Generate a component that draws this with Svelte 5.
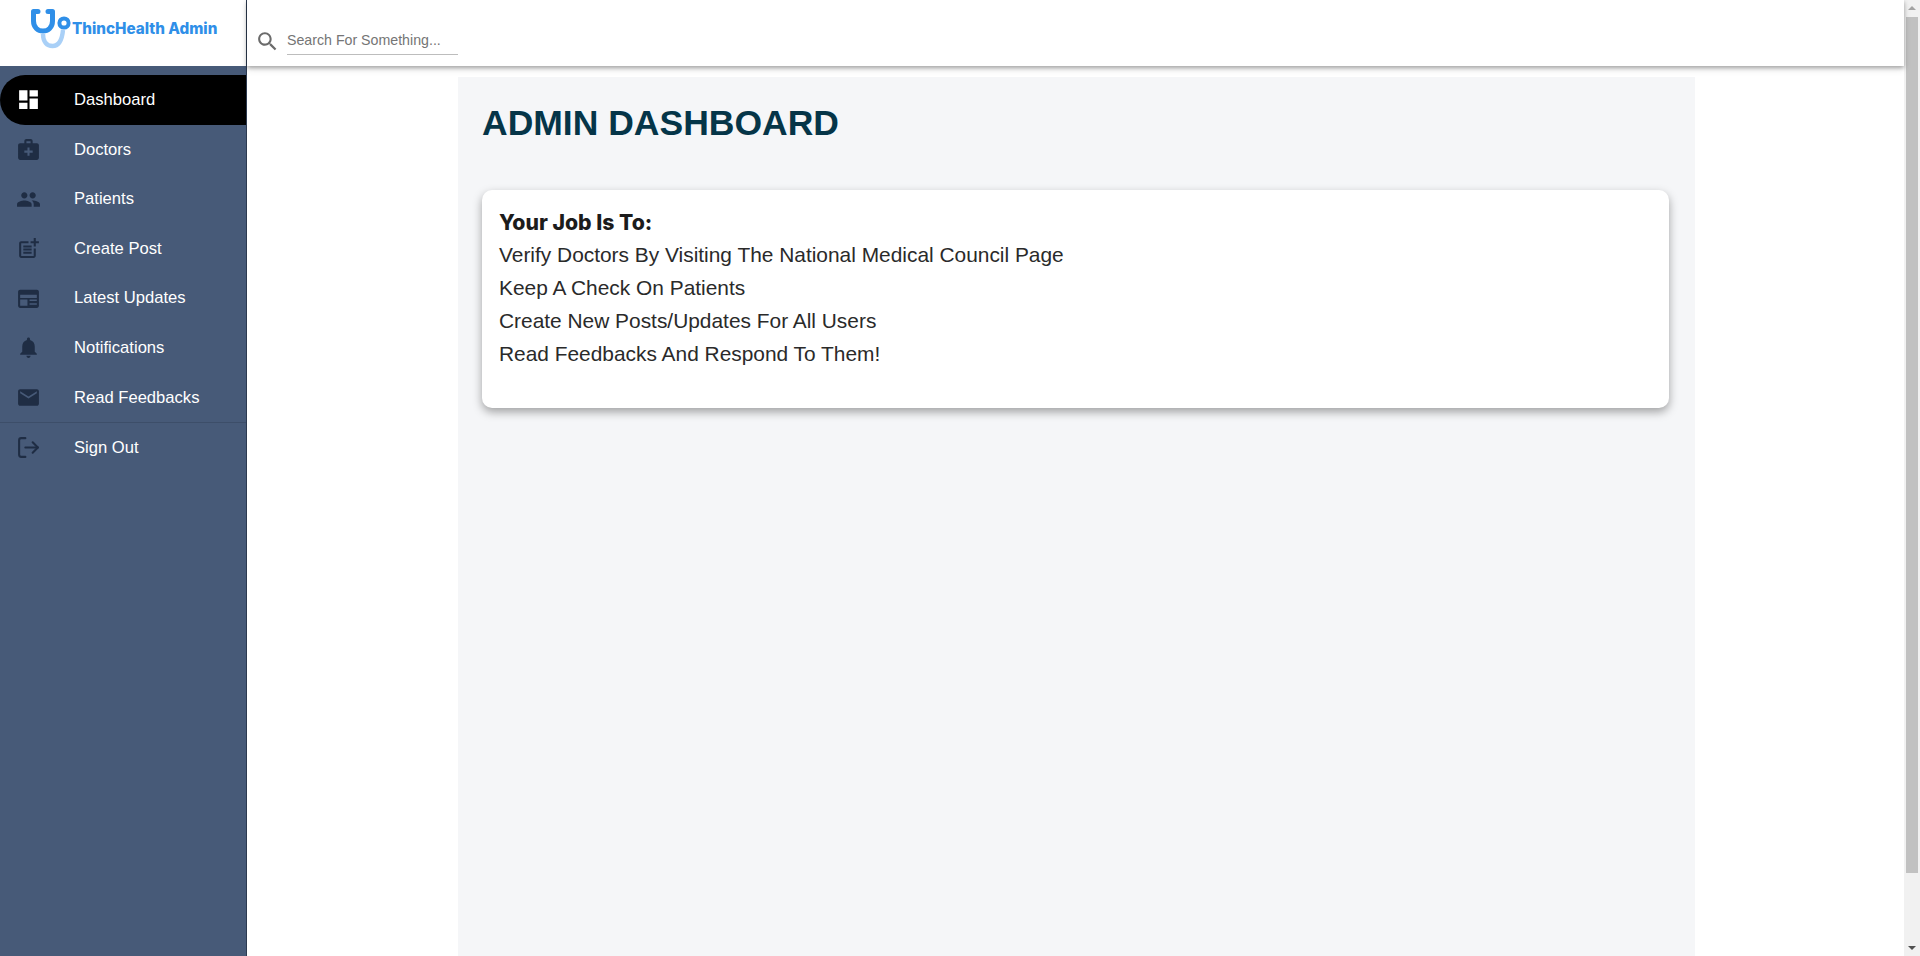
<script>
  const items = [
    { label: 'Dashboard', d: 'M3 13h8V3H3v10zm0 8h8v-6H3v6zm10 0h8V11h-8v10zm0-18v6h8V3h-8z', active: true },
    { label: 'Doctors', d: 'M20 6h-4V4c0-1.1-.9-2-2-2h-4c-1.1 0-2 .9-2 2v2H4c-1.1 0-2 .9-2 2v12c0 1.1.9 2 2 2h16c1.1 0 2-.9 2-2V8c0-1.1-.9-2-2-2zM10 4h4v2h-4V4zm6 11h-3v3h-2v-3H8v-2h3v-3h2v3h3v2z' },
    { label: 'Patients', d: 'M16 11c1.66 0 2.99-1.34 2.99-3S17.66 5 16 5c-1.66 0-3 1.34-3 3s1.34 3 3 3zm-8 0c1.66 0 2.99-1.34 2.99-3S9.66 5 8 5C6.34 5 5 6.34 5 8s1.34 3 3 3zm0 2c-2.33 0-7 1.17-7 3.5V19h14v-2.5c0-2.33-4.67-3.5-7-3.5zm8 0c-.29 0-.62.02-.97.05 1.16.84 1.97 1.97 1.97 3.45V19h6v-2.5c0-2.33-4.67-3.5-7-3.5z' },
    { label: 'Create Post', d: 'M17 19.22H5V7h7V5H5c-1.1 0-2 .9-2 2v12c0 1.1.9 2 2 2h12c1.1 0 2-.9 2-2v-7h-2v7.22zM19 2h-2v3h-3c.01.01 0 2 0 2h3v2.99c.01.01 2 0 2 0V7h3V5h-3V2zM7 9h8v2H7zM7 12v2h8v-2h-3zM7 15h8v2H7z' },
    { label: 'Latest Updates', d: 'M4 3.5h16c1.1 0 2 .9 2 2V19c0 1.1-.9 2-2 2H4c-1.1 0-2-.9-2-2V5.5c0-1.1.9-2 2-2zM4 8.5v3h16v-3H4zM4 13v6h7v-6H4zM13 13v1.5h7V13h-7zM13 16.5V18h7v-1.5h-7z' },
    { label: 'Notifications', d: 'M12 22c1.1 0 2-.9 2-2h-4c0 1.1.89 2 2 2zm6-6v-5c0-3.07-1.64-5.64-4.5-6.32V4c0-.83-.67-1.5-1.5-1.5s-1.5.67-1.5 1.5v.68C7.63 5.36 6 7.92 6 11v5l-2 2v1h16v-1l-2-2z' },
    { label: 'Read Feedbacks', d: 'M20 4H4c-1.1 0-1.99.9-1.99 2L2 18c0 1.1.9 2 2 2h16c1.1 0 2-.9 2-2V6c0-1.1-.9-2-2-2zm0 4l-8 5-8-5V6l8 5 8-5v2z' }
  ];
  const tasks = [
    'Verify Doctors By Visiting The National Medical Council Page',
    'Keep A Check On Patients',
    'Create New Posts/Updates For All Users',
    'Read Feedbacks And Respond To Them!'
  ];
</script>

<div class="page">
  <aside class="sidebar">
    <div class="brand">
      <svg class="logo" viewBox="0 0 46 46" width="46" height="46" aria-hidden="true">
        <path d="M16 27 C16 35 20 39 25.5 39 C32 39 35 34 36 23" fill="none" stroke="#a9d0f7" stroke-width="4.4"/>
        <path d="M11 4.5 H6.5 V14 C6.5 20.5 11 24 16 24 C21 24 25.5 20.5 25.5 14 V4.5 H21" fill="none" stroke="#2f8fe8" stroke-width="5" stroke-linecap="round" stroke-linejoin="round"/>
        <circle cx="37" cy="16" r="4.6" fill="#fff" stroke="#2f8fe8" stroke-width="4"/>
      </svg>
      <span class="brand-name">ThincHealth Admin</span>
    </div>
    <nav class="nav">
      {#each items as item}
        <a class="nav-item" class:active={item.active} href="#top">
          <svg class="icon" viewBox="0 0 24 24" aria-hidden="true"><path fill-rule="evenodd" d={item.d} /></svg>
          <span>{item.label}</span>
        </a>
      {/each}
      <a class="nav-item signout" href="#top">
        <svg class="icon stroke" viewBox="0 0 24 24" aria-hidden="true">
          <path d="M9 21H5a2 2 0 0 1-2-2V5a2 2 0 0 1 2-2h4" />
          <path d="M16 17l5-5-5-5" />
          <path d="M21 12H9" />
        </svg>
        <span>Sign Out</span>
      </a>
    </nav>
  </aside>

  <div class="main">
    <header class="topbar">
      <svg class="search-icon" viewBox="0 0 24 24" aria-hidden="true">
        <path d="M15.5 14h-.79l-.28-.27C15.41 12.59 16 11.11 16 9.5 16 5.91 13.09 3 9.5 3S3 5.91 3 9.5 5.91 16 9.5 16c1.61 0 3.09-.59 4.23-1.57l.27.28v.79l5 4.99L20.49 19l-4.99-5zm-6 0C7.01 14 5 11.99 5 9.5S7.01 5 9.5 5 14 7.01 14 9.5 11.99 14 9.5 14z" />
      </svg>
      <input class="search" type="text" placeholder="Search For Something..." />
    </header>
    <main class="content">
      <section class="panel">
        <h1>ADMIN DASHBOARD</h1>
        <div class="card">
          <h2>Your Job Is To:</h2>
          {#each tasks as task}
            <p>{task}</p>
          {/each}
        </div>
      </section>
    </main>
  </div>

  <div class="scrollbar" aria-hidden="true">
    <span class="arrow up"></span>
    <span class="thumb"></span>
    <span class="arrow down"></span>
  </div>
</div>

<style>
  :global(body) {
    margin: 0;
    background: #fff;
    font-family: "Liberation Sans", Arial, sans-serif;
  }
  .page {
    display: flex;
    height: 956px;
    overflow: hidden;
  }
  .sidebar {
    width: 246px;
    flex: none;
    display: flex;
    flex-direction: column;
    background: #475a78;
    border-right: 1px solid #2c3a50;
  }
  .brand {
    height: 66px;
    flex: none;
    background: #fff;
    display: flex;
    align-items: flex-start;
    padding-left: 27px;
    box-sizing: border-box;
  }
  .logo {
    flex: none;
    margin-top: 7px;
    margin-right: -1px;
  }
  .brand-name {
    margin-top: 19px;
    font-family: Inter, sans-serif;
    font-size: 15.25px;
    font-weight: 800;
    line-height: 20px;
    color: #2f8fe8;
    white-space: nowrap;
  }
  .nav {
    padding-top: 9.15px;
    display: flex;
    flex-direction: column;
  }
  .nav-item {
    height: 49.6px;
    display: flex;
    align-items: center;
    padding-left: 16px;
    box-sizing: border-box;
    color: #fff;
    text-decoration: none;
    font-size: 16.6px;
  }
  .nav-item.active {
    background: #000;
    border-radius: 25px 0 0 25px;
  }
  .nav-item.signout {
    border-top: 1px solid #3d4e69;
  }
  .icon {
    width: 25px;
    height: 25px;
    flex: none;
    margin-right: 33px;
    fill: #1f2d44;
  }
  .active .icon {
    fill: #fff;
  }
  .icon.stroke {
    fill: none;
    stroke: #1f2d44;
    stroke-width: 2;
    stroke-linecap: round;
    stroke-linejoin: round;
  }
  .main {
    flex: 1;
    min-width: 0;
    display: flex;
    flex-direction: column;
    position: relative;
  }
  .topbar {
    height: 66px;
    flex: none;
    box-sizing: border-box;
    display: flex;
    align-items: flex-end;
    padding: 0 0 11px 8px;
    background: #fff;
    box-shadow: 0 2px 4px rgba(0, 0, 0, 0.3), 0 3px 8px rgba(0, 0, 0, 0.1);
    position: relative;
    z-index: 1;
  }
  .search-icon {
    width: 25px;
    height: 25px;
    fill: #6b6b6b;
    margin-right: 7px;
    margin-bottom: 1px;
  }
  .search {
    width: 171px;
    height: 26px;
    box-sizing: border-box;
    border: 0;
    border-bottom: 1px solid #bdbdbd;
    outline: 0;
    padding: 0 0 4px;
    font-family: "Liberation Sans", Arial, sans-serif;
    font-size: 14.2px;
    background: transparent;
  }
  .search::placeholder {
    color: #757575;
    opacity: 1;
  }
  .content {
    flex: 1;
    padding-top: 11px;
    padding-left: 211px;
    padding-right: 209px;
    min-height: 0;
  }
  .panel {
    height: 100%;
    background: #f5f6f8;
    box-sizing: border-box;
    padding: 25px 26px 24px 24px;
  }
  h1 {
    margin: 0;
    font-size: 35.5px;
    line-height: 42px;
    font-weight: 700;
    color: #053548;
  }
  .card {
    margin-top: 46px;
    height: 218px;
    box-sizing: border-box;
    background: #fff;
    border-radius: 10px;
    padding: 15px 17px;
    box-shadow: 0 4px 10px rgba(0, 0, 0, 0.35);
  }
  h2 {
    margin: 0;
    padding-top: 1px;
    font-family: Inter, sans-serif;
    font-size: 21.2px;
    font-weight: 800;
    line-height: 32px;
    color: #1c1c1c;
  }
  p {
    margin: 0;
    font-size: 20.9px;
    line-height: 33px;
    color: #2a2a2a;
  }
  .scrollbar {
    width: 16px;
    flex: none;
    background: #f1f1f1;
    display: flex;
    flex-direction: column;
    align-items: center;
  }
  .thumb {
    width: 12px;
    height: 856px;
    background: #c1c1c1;
    margin-bottom: 66px;
  }
  .arrow {
    width: 0;
    height: 0;
    flex: none;
    border-left: 4px solid transparent;
    border-right: 4px solid transparent;
  }
  .arrow.up {
    border-bottom: 4px solid #a3a3a3;
    margin: 6px 0 7px;
  }
  .arrow.down {
    border-top: 4px solid #505050;
    margin-top: auto;
    margin-bottom: 6px;
  }
</style>
